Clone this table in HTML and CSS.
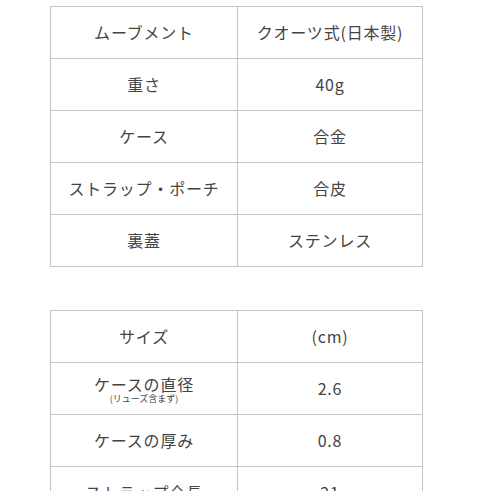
FILE: index.html
```html
<!DOCTYPE html>
<html lang="ja">
<head>
<meta charset="utf-8">
<link rel="stylesheet" href="styles.css">
</head>
<body>
<div class="page">
  <table class="spec">
    <tr><td>ムーブメント</td><td>クオーツ式(日本製)</td></tr>
    <tr><td>重さ</td><td>40g</td></tr>
    <tr><td>ケース</td><td>合金</td></tr>
    <tr><td>ストラップ・ポーチ</td><td>合皮</td></tr>
    <tr><td>裏蓋</td><td>ステンレス</td></tr>
  </table>
  <table class="spec">
    <tr><td>サイズ</td><td>(cm)</td></tr>
    <tr><td><div class="two">ケースの直径</div><div class="note">(リューズ含まず)</div></td><td>2.6</td></tr>
    <tr><td>ケースの厚み</td><td>0.8</td></tr>
    <tr><td>ストラップ全長</td><td>21</td></tr>
  </table>
</div>
</body>
</html>
```
FILE: styles.css
```css
html, body {
  margin: 0;
  padding: 0;
  background: #ffffff;
}
.page {
  padding: 6px 0 0 50px;
  display: flex;
  flex-direction: column;
  gap: 43px;
  font-family: "Noto Sans CJK JP", "Noto Sans", sans-serif;
  color: #444444;
}
.spec {
  border-collapse: collapse;
  width: 373px;
  table-layout: fixed;
}
.spec td {
  border: 1px solid #c4c4c4;
  height: 51px;
  padding: 0;
  text-align: center;
  vertical-align: middle;
  font-size: 16px;
  letter-spacing: 0.8px;
  line-height: 1.2;
}
.spec td:first-child {
  width: 186px;
}
.two {
  line-height: 18px;
  padding-top: 2px;
}
.note {
  font-size: 9px;
  line-height: 12px;
  letter-spacing: 0;
}
```
